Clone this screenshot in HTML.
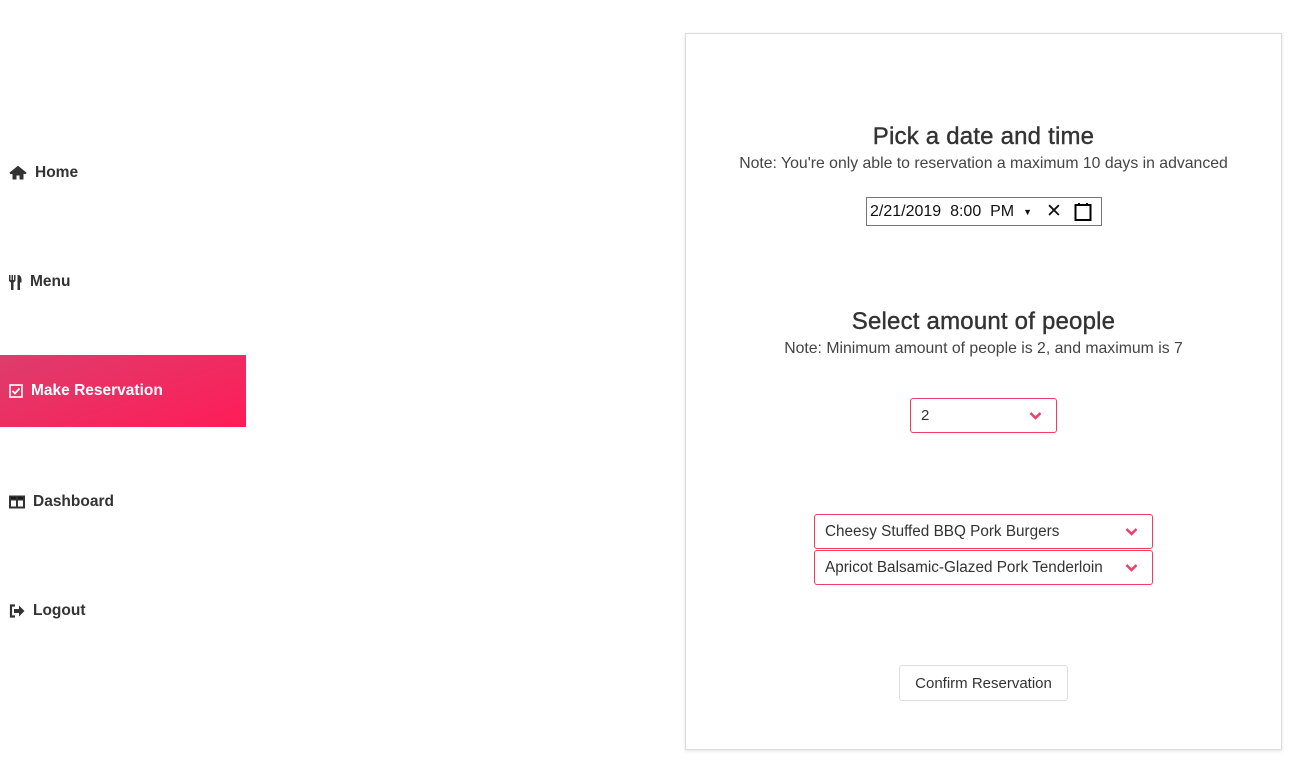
<!DOCTYPE html><html><head><style>
body{margin:0;width:1314px;height:777px;background:#fff;font-family:"Liberation Sans",sans-serif;color:#333;position:relative;overflow:hidden}
.nav{position:absolute;left:0;width:246px;height:72px;display:flex;align-items:center;font-weight:bold;font-size:15.5px;color:#333}
.nav svg{margin-left:9px;margin-right:8px}
.act{background:linear-gradient(160deg,#dd3d6c,#ff1c58);color:#fff}
.card{position:absolute;left:685px;top:33px;width:595px;height:715px;border:1px solid #ddd;box-shadow:0 1px 3px rgba(0,0,0,.12)}
.c{position:absolute;left:0;width:100%;text-align:center}
h2{margin:0;font-size:24px;font-weight:normal;color:#333;-webkit-text-stroke:.4px #333;letter-spacing:.2px}
.n{font-size:15.8px;color:#444}
.sel{position:absolute;border:1px solid #f43b66;border-radius:3px;font-size:15px;display:flex;align-items:center;padding-left:10px;box-sizing:border-box;color:#333}
.sel svg{position:absolute;right:14px}
</style></head><body>
<div class="nav" style="top:137px"><svg width="18" height="14" viewBox="0 0 18 14"><path d="M9 1L1 8h2.5v5.5h4V9.5h3v4h4V8H17z" fill="#333"/><path d="M1 7.5L9 1l8 6.5" stroke="#333" stroke-width="2" fill="none"/></svg>Home</div>
<div class="nav" style="top:246px"><svg width="13" height="15" viewBox="0 0 13 15"><path d="M0 0h1.5v5h1V0H4v5h1V0h1.5v6L4.5 7.5V15H2V7.5L0 6zM9 0c2 0 3.5 1.5 3.5 5v2.5H11V15H8.5V0z" fill="#333"/></svg>Menu</div>
<div class="nav act" style="top:355px;color:#fff"><svg width="14" height="14" viewBox="0 0 14 14"><rect x="1" y="1" width="12" height="12" fill="none" stroke="#fff" stroke-width="1.6"/><path d="M3.5 7l2.5 2.5L10.5 4.5" stroke="#fff" stroke-width="1.8" fill="none"/></svg>Make Reservation</div>
<div class="nav" style="top:466px"><svg width="16" height="14" viewBox="0 0 16 14"><rect x="1" y="1.5" width="14" height="11" fill="none" stroke="#333" stroke-width="2"/><path d="M1 1.5h14v3H1zM8 1.5v11" stroke="#333" stroke-width="2"/></svg>Dashboard</div>
<div class="nav" style="top:575px"><svg width="16" height="14" viewBox="0 0 16 14"><path d="M6 1.5H2v11h4" stroke="#333" stroke-width="2.2" fill="none"/><path d="M5 5h5V1.5L15.5 7 10 12.5V9H5z" fill="#333"/></svg>Logout</div>
<div class="card">
<div class="c" style="top:89px"><h2>Pick a date and time</h2></div>
<div class="c n" style="top:121px">Note: You're only able to reservation a maximum 10 days in advanced</div>
<div style="position:absolute;left:180px;top:163px;width:236px;height:29px;border:1px solid #777;box-sizing:border-box;font-size:16px;display:flex;align-items:center;padding-left:3px;color:#111">2/21/2019&nbsp;&nbsp;8:00&nbsp;&nbsp;PM<span style="font-size:9px;margin-left:9px">▼</span><span style="font-size:19px;margin-left:14px">✕</span><svg style="margin-left:12px" width="18" height="19" viewBox="0 0 18 19"><rect x="1.5" y="3" width="15" height="15" fill="none" stroke="#000" stroke-width="2"/><path d="M5 1v3M13 1v3" stroke="#000" stroke-width="2"/></svg></div>
<div class="c" style="top:274px"><h2>Select amount of people</h2></div>
<div class="c n" style="top:306px">Note: Minimum amount of people is 2, and maximum is 7</div>
<div class="sel" style="left:224px;top:364px;width:147px;height:35px">2<svg width="13" height="9" viewBox="0 0 13 9"><path d="M1.5 2l5 5 5-5" stroke="#f43b66" stroke-width="2.5" fill="none"/></svg></div>
<div class="sel" style="left:128px;top:480px;width:339px;height:35px;font-size:15.3px">Cheesy Stuffed BBQ Pork Burgers<svg width="13" height="9" viewBox="0 0 13 9"><path d="M1.5 2l5 5 5-5" stroke="#f43b66" stroke-width="2.5" fill="none"/></svg></div>
<div class="sel" style="left:128px;top:516px;width:339px;height:35px;font-size:15.3px">Apricot Balsamic-Glazed Pork Tenderloin<svg width="13" height="9" viewBox="0 0 13 9"><path d="M1.5 2l5 5 5-5" stroke="#f43b66" stroke-width="2.5" fill="none"/></svg></div>
<div style="position:absolute;left:213px;top:631px;width:169px;height:36px;border:1px solid #ddd;border-radius:3px;box-sizing:border-box;font-size:15px;display:flex;align-items:center;justify-content:center;color:#333">Confirm Reservation</div>
</div>
</body></html>
